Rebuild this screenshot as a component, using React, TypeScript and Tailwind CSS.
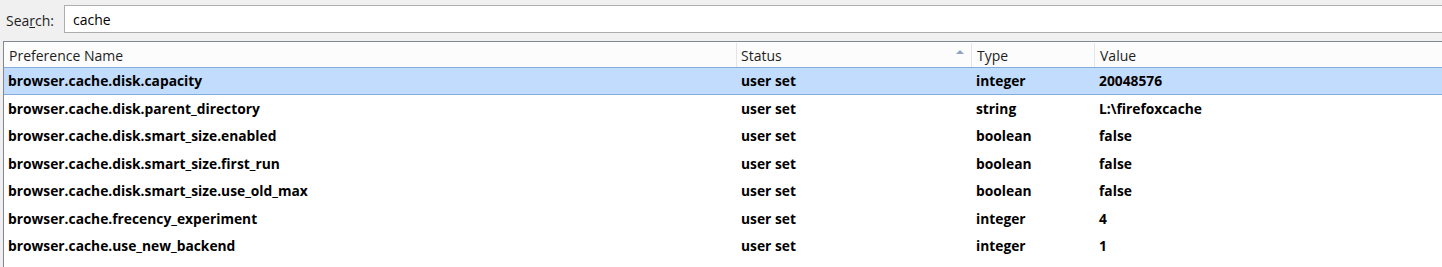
const rows = [
  ["browser.cache.disk.capacity", "user set", "integer", "20048576"],
  ["browser.cache.disk.parent_directory", "user set", "string", "L:\\firefoxcache"],
  ["browser.cache.disk.smart_size.enabled", "user set", "boolean", "false"],
  ["browser.cache.disk.smart_size.first_run", "user set", "boolean", "false"],
  ["browser.cache.disk.smart_size.use_old_max", "user set", "boolean", "false"],
  ["browser.cache.frecency_experiment", "user set", "integer", "4"],
  ["browser.cache.use_new_backend", "user set", "integer", "1"],
];

const App = () => {
  return (
    <div className="w-[1442px] h-[267px] overflow-hidden bg-[#f0f0f0] text-[14px] text-black font-['Open_Sans',sans-serif]">
      <div className="flex items-center h-[41px] pl-[6px] pb-[4px] pt-[1px]">
        <label className="w-[58px] text-[#1e1e1e] pt-[2px]">
          Sea<span className="underline">r</span>ch:
        </label>
        <div className="flex-1 h-[28px] bg-white border border-[#adadad] border-r-0 flex items-center pl-[8px] pt-[1px]">
          cache
        </div>
      </div>

      <div className="ml-[3px] h-[226px] bg-white border-t border-l border-[#828790]">
        <div className="flex h-[25px] items-center bg-[#fcfcfc] text-[#1e1e1e] pt-[1px]">
          <div className="w-[733px] pl-[5px] border-r border-[#e5e5e5] h-full flex items-center">Preference Name</div>
          <div className="w-[235px] pl-[4px] pr-[7px] border-r border-[#e5e5e5] h-full flex items-center justify-between">
            Status
            <svg width="8" height="5" viewBox="0 0 8 5" className="mb-[8px]">
              <path d="M0 5 L4 1 L8 5 Z" fill="#8ba4c3" />
            </svg>
          </div>
          <div className="w-[123px] pl-[5px] border-r border-[#e5e5e5] h-full flex items-center">Type</div>
          <div className="flex-1 pl-[5px] h-full flex items-center">Value</div>
        </div>

        {rows.map((r, i) => (
          <div
            key={r[0]}
            className={
              i === 0
                ? "flex items-center h-[27.5px] pt-[2px] text-[13.8px] font-bold bg-[#c1dcfc] border-y border-[#84acdd]"
                : "flex items-center h-[27.5px] pt-[2px] text-[13.8px] font-bold"
            }
          >
            <div className="w-[733px] pl-[4px]">{r[0]}</div>
            <div className="w-[235px] pl-[4px]">{r[1]}</div>
            <div className="w-[123px] pl-[4px]">{r[2]}</div>
            <div className="flex-1 pl-[4px]">{r[3]}</div>
          </div>
        ))}
      </div>
    </div>
  );
};

export default App;
